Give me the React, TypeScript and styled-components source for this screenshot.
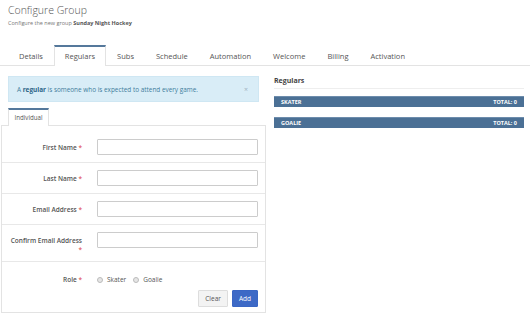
import styled, { createGlobalStyle } from "styled-components"

const GlobalStyle = createGlobalStyle`
  body {
    margin: 0;
    background: #fff;
    font-family: "Open Sans", "Liberation Sans", sans-serif;
    color: #555;
  }
  * { box-sizing: border-box; }
`;

const Page = styled.div`
  width: 530px;
  height: 321px;
  padding: 0 8px;
  overflow: hidden;
`;

const Title = styled.h1`
  margin: 0;
  padding-top: 3px;
  font-size: 10.5px;
  font-weight: 300;
  line-height: 15px;
  color: #555;
`;

const Subtitle = styled.div`
  font-size: 5.5px;
  line-height: 8px;
  color: #777;
  margin-top: 1px;

  b { color: #555; font-weight: 700; }
`;

const TabBar = styled.div`
  display: flex;
  margin: 18px -8px 0;
  padding-left: 8px;
  border-bottom: 1px solid #e3e3e3;
  height: 21px;
`;

const Tab = styled.div<{ $active?: boolean }>`
  padding: 0 10px;
  text-align: center;
  font-size: 7.5px;
  line-height: 18px;
  color: #555;
  border-top: 2px solid ${p => (p.$active ? "#55789b" : "transparent")};
  border-left: 1px solid ${p => (p.$active ? "#e3e3e3" : "transparent")};
  border-right: 1px solid ${p => (p.$active ? "#e3e3e3" : "transparent")};
  background: #fff;
  margin-bottom: ${p => (p.$active ? "-1px" : "0")};
`;

const Columns = styled.div`
  display: grid;
  grid-template-columns: 251px 250px;
  column-gap: 15px;
  margin-top: 10px;
`;

const LeftCol = styled.div``;

const Alert = styled.div`
  display: flex;
  justify-content: space-between;
  align-items: center;
  height: 26px;
  padding: 0 10px 0 8px;
  background: #d9edf7;
  border: 1px solid #cfe7f3;
  color: #3f7d9c;
  font-size: 6.4px;

  b { font-weight: 700; color: #2b6486; }
`;

const Close = styled.span`
  color: #9fb3bf;
  font-size: 7px;
`;

const SubTabBar = styled.div`
  display: flex;
  margin: 6px -7px 0;
  padding-left: 7px;
  border-bottom: 1px solid #e3e3e3;
`;

const SubTab = styled.div`
  width: 41px;
  height: 18px;
  margin-bottom: -1px;
  background: #fff;
  border-top: 2px solid #55789b;
  border-left: 1px solid #e3e3e3;
  border-right: 1px solid #e3e3e3;
  font-size: 6.2px;
  line-height: 15px;
  text-align: center;
  color: #555;
`;

const Panel = styled.div`
  margin: 0 -7px;
  padding-bottom: 5px;
  border: 1px solid #e3e3e3;
  border-top: none;
`;

const Row = styled.div<{ $first?: boolean; $last?: boolean }>`
  display: grid;
  grid-template-columns: 80px 161px;
  column-gap: 15px;
  align-items: start;
  padding: ${p => (p.$first ? "13px 0 7px" : p.$last ? "9px 0 2px" : "7px 0")};
  border-bottom: ${p => (p.$last ? "none" : "1px solid #e8e8e8")};
`;

const Label = styled.label`
  padding: 4px 0 0 8px;
  text-align: right;
  font-size: 6.5px;
  font-weight: 600;
  line-height: 9px;
  color: #555;
`;

const Star = styled.span`
  color: #e2646b;
`;

const Input = styled.input`
  display: block;
  height: 16px;
  width: 161px;
  border: 1px solid #ccc;
  border-radius: 1px;
  padding: 0 4px;
  font-size: 7px;
  font-family: inherit;
`;

const Radios = styled.div`
  display: flex;
  align-items: center;
  gap: 7px;
  height: 17px;
  font-size: 6.5px;
  color: #555;
`;

const RadioItem = styled.label`
  display: flex;
  align-items: center;
  gap: 4px;
`;

const RadioDot = styled.span`
  width: 6px;
  height: 6px;
  border-radius: 50%;
  border: 1px solid #bbb;
  background: #e6e6e6;
`;

const ButtonRow = styled.div`
  display: flex;
  justify-content: flex-end;
  gap: 4px;
  padding: 0 7px 0 0;
`;

const Button = styled.button<{ $primary?: boolean }>`
  height: 17px;
  padding: 0 6px;
  font-family: inherit;
  font-size: 6.5px;
  border-radius: 1px;
  border: 1px solid ${p => (p.$primary ? "#3a66c4" : "#ddd")};
  background: ${p => (p.$primary ? "#3d69c6" : "#f3f3f3")};
  color: ${p => (p.$primary ? "#fff" : "#555")};
`;

const RightCol = styled.div``;

const SideHeading = styled.div`
  font-size: 7px;
  font-weight: 700;
  color: #444;
  line-height: 9px;
  padding: 0 0 3px;
  border-bottom: 1px solid #eee;
`;

const Bar = styled.div`
  display: flex;
  justify-content: space-between;
  align-items: center;
  height: 11px;
  margin-top: 7px;
  padding: 0 7px;
  background: #4b7095;
  border-top: 1px solid #6d8cac;
  color: #fff;
  font-size: 5.5px;
  font-weight: 700;

  & + & { margin-top: 10px; }
`;

const fields = ["First Name", "Last Name", "Email Address", "Confirm Email Address"]

const tabs = ["Details", "Regulars", "Subs", "Schedule", "Automation", "Welcome", "Billing", "Activation"]

export default function App() {
  return (
    <Page>
      <GlobalStyle />
      <Title>Configure Group</Title>
      <Subtitle>Configure the new group <b>Sunday Night Hockey</b></Subtitle>
      <TabBar>
        {tabs.map(t => (
          <Tab key={t} $active={t === "Regulars"}>{t}</Tab>
        ))}
      </TabBar>
      <Columns>
        <LeftCol>
          <Alert>
            <span>A <b>regular</b> is someone who is expected to attend every game.</span>
            <Close>×</Close>
          </Alert>
          <SubTabBar>
            <SubTab>Individual</SubTab>
          </SubTabBar>
          <Panel>
            {fields.map((f, i) => (
              <Row key={f} $first={i === 0}>
                <Label>{f} <Star>*</Star></Label>
                <Input type="text" />
              </Row>
            ))}
            <Row $last>
              <Label>Role <Star>*</Star></Label>
              <Radios>
                <RadioItem><RadioDot /> Skater</RadioItem>
                <RadioItem><RadioDot /> Goalie</RadioItem>
              </Radios>
            </Row>
            <ButtonRow>
              <Button>Clear</Button>
              <Button $primary>Add</Button>
            </ButtonRow>
          </Panel>
        </LeftCol>
        <RightCol>
          <SideHeading>Regulars</SideHeading>
          <Bar><span>SKATER</span><span>TOTAL: 0</span></Bar>
          <Bar><span>GOALIE</span><span>TOTAL: 0</span></Bar>
        </RightCol>
      </Columns>
    </Page>
  )
}
